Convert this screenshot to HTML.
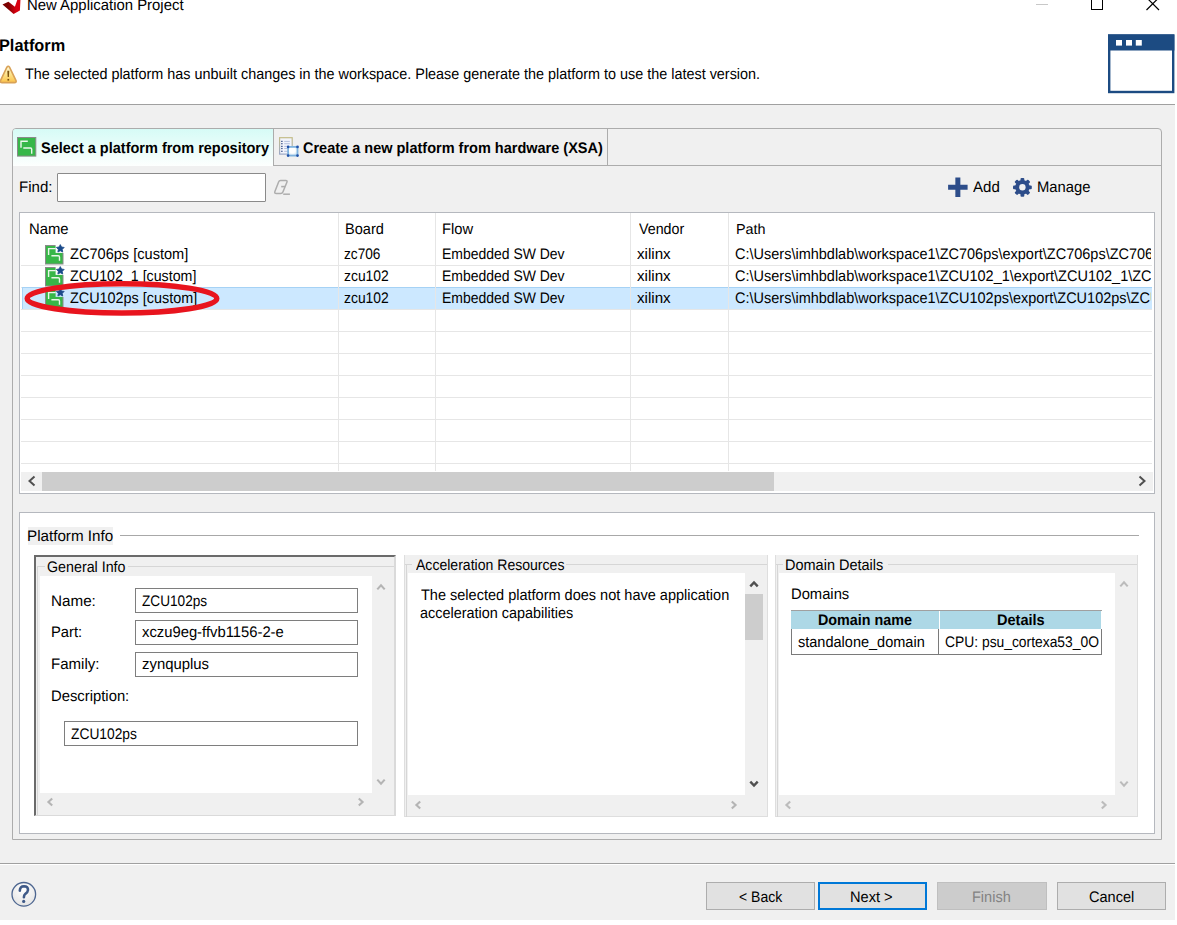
<!DOCTYPE html>
<html><head><meta charset="utf-8"><style>
html,body{margin:0;padding:0;width:1177px;height:925px;overflow:hidden;background:#fff}
body{position:relative;font-family:"Liberation Sans",sans-serif;}
body>div,body>svg{position:absolute}
.t{white-space:nowrap;line-height:1.149;text-rendering:geometricPrecision;}
</style></head><body>
<div style="left:0px;top:0px;width:1177px;height:925px;background:#fff"></div>
<div style="left:0px;top:104px;width:1175px;height:1px;background:#a0a0a0"></div>
<div style="left:0px;top:105px;width:1175px;height:815px;background:#f0f0f0"></div>
<svg style="left:0px;top:0px" width="24" height="16"><defs><linearGradient id="lg" x1="0" x2="1" y1="0" y2="0"><stop offset="0.3" stop-color="#7a0000"/><stop offset="0.75" stop-color="#d80010"/></linearGradient></defs><polygon points="2.5,4.4 8.4,1.8 14.9,6.8 17.6,-1 20.5,-1 19.9,10.4 13.6,13.9" fill="url(#lg)"/></svg>
<div class="t" style="left:27.17px;top:-3px;font-size:15.30px;color:#000;transform:scaleX(0.9740);transform-origin:0 0;">New Application Project</div>
<div style="left:1036px;top:4px;width:12px;height:1px;background:#c8c8c8"></div>
<div style="left:1090.5px;top:-4px;width:12.5px;height:13.6px;border:1.2px solid #000;box-sizing:border-box"></div>
<svg style="left:1144px;top:-3px" width="18" height="16"><path d="M2.5,0.5 L15,13 M15,0.5 L2.5,13" stroke="#000" stroke-width="1.2"/></svg>
<div class="t" style="left:-0.60px;top:36px;font-size:16.80px;font-weight:bold;color:#000;transform:scaleX(0.9715);transform-origin:0 0;">Platform</div>
<svg style="left:0px;top:64px" width="18" height="21"><defs><linearGradient id="wg" x1="0" x2="0" y1="0" y2="1"><stop offset="0" stop-color="#fffbe0"/><stop offset="0.5" stop-color="#fde38a"/><stop offset="1" stop-color="#fbc24a"/></linearGradient></defs><path d="M6.9,3.2 Q8.2,1.2 9.5,3.2 L15.9,16.3 Q16.8,18.6 14.4,18.6 L2.1,18.6 Q-0.3,18.6 0.6,16.3 Z" fill="url(#wg)" stroke="#d9a257" stroke-width="1.6" stroke-linejoin="round"/><path d="M7.3,6.8 H9.3 L8.9,13 H7.7 Z" fill="#7a5210"/><rect x="7.45" y="14.9" width="1.7" height="1.7" fill="#7a5210"/></svg>
<div class="t" style="left:24.68px;top:66px;font-size:15.30px;color:#000;transform:scaleX(0.9406);transform-origin:0 0;">The selected platform has unbuilt changes in the workspace. Please generate the platform to use the latest version.</div>
<svg style="left:1107px;top:34px" width="68" height="60"><rect x="2.2" y="1.5" width="64" height="56.5" fill="#fff" stroke="#1c4b82" stroke-width="2.4"/><rect x="1" y="0.5" width="66.4" height="16" fill="#1c4b82"/><rect x="9" y="6" width="6" height="5.6" fill="#fff"/><rect x="19" y="6" width="6" height="5.6" fill="#fff"/><rect x="28.8" y="6" width="6" height="5.6" fill="#fff"/></svg>
<div style="left:12px;top:128px;width:1150px;height:712px;border:1px solid #acacac;border-radius:4px 4px 0 0;box-sizing:border-box"></div>
<div style="left:13px;top:129px;width:260px;height:37px;background:linear-gradient(#d6fbf6,#fdfffe);border-radius:3px 0 0 0"></div>
<div style="left:273px;top:129px;width:1px;height:37px;background:#acacac"></div>
<div style="left:273px;top:165px;width:888px;height:1px;background:#acacac"></div>
<div style="left:607px;top:129px;width:1px;height:36px;background:#acacac"></div>
<svg style="left:16px;top:136px" width="22" height="22"><rect x="1.5" y="1.5" width="18.3" height="18.6" fill="#36b749" stroke="#8a8a8a" stroke-width="1"/><path d="M5,11.8 V5.2 H11.8 M7.3,12 H14.5 Q15.7,12 15.7,13.2 V17.7" fill="none" stroke="#fff" stroke-width="1.4" opacity="0.9"/></svg>
<div class="t" style="left:40.56px;top:140px;font-size:15.30px;font-weight:bold;color:#000;transform:scaleX(0.9481);transform-origin:0 0;">Select a platform from repository</div>
<svg style="left:278px;top:136px" width="22" height="22"><defs><linearGradient id="dg" x1="0" x2="0" y1="0" y2="1"><stop offset="0" stop-color="#c4bc88"/><stop offset="1" stop-color="#9aa8c8"/></linearGradient><radialGradient id="sq" cx="0.45" cy="0.4" r="0.6"><stop offset="0.5" stop-color="#ffffff"/><stop offset="1" stop-color="#cfe6f5"/></radialGradient></defs><rect x="1.6" y="1.7" width="12.6" height="16.4" fill="#f2f4fc" stroke="url(#dg)" stroke-width="1.2"/><g fill="#566a98"><rect x="3" y="4.8" width="1.7" height="1.2"/><rect x="3" y="7.1" width="1.7" height="1.2"/><rect x="3" y="9.8" width="1.7" height="1.2"/><rect x="3" y="11.9" width="1.7" height="1.2"/><rect x="3" y="14.7" width="1.7" height="1.2"/></g><g fill="#b4c0dc"><rect x="6.2" y="4.9" width="5.6" height="1"/><rect x="6.2" y="7.2" width="5.6" height="1"/><rect x="6.2" y="9.9" width="5.6" height="1"/><rect x="6.2" y="12.0" width="5.6" height="1"/><rect x="6.2" y="14.8" width="5.6" height="1"/></g><rect x="10.1" y="10.9" width="9.4" height="8.7" fill="url(#sq)" stroke="#7fb3de" stroke-width="1.8"/><g fill="#1f4fa8"><circle cx="10.1" cy="10.9" r="1.3"/><circle cx="10.1" cy="19.6" r="1.3"/><circle cx="19.5" cy="10.9" r="1.3"/><circle cx="19.5" cy="19.6" r="1.3"/></g></svg>
<div class="t" style="left:302.62px;top:140px;font-size:15.30px;font-weight:bold;color:#000;transform:scaleX(0.9482);transform-origin:0 0;">Create a new platform from hardware (XSA)</div>
<div class="t" style="left:18.56px;top:179px;font-size:15.30px;color:#000;transform:scaleX(0.9852);transform-origin:0 0;">Find:</div>
<div style="left:57px;top:172.5px;width:208.5px;height:29.5px;background:#fff;border:1.5px solid #8a8a8a;border-radius:1px;box-sizing:border-box"></div>
<svg style="left:273px;top:179px" width="18" height="17"><path d="M7.6,1.5 H12.8 Q14.6,1.5 13.9,3.2 L9.9,12.9 Q9.3,14.5 7.6,14.5 H3.3 Q1.2,14.5 1.9,12.6 L5.6,2.9 Q6.1,1.5 7.6,1.5 Z" fill="none" stroke="#adadad" stroke-width="1.5"/><path d="M8.2,7.6 H12" stroke="#adadad" stroke-width="1.6"/><path d="M10.2,15.2 H16.9" stroke="#adadad" stroke-width="1.5"/></svg>
<svg style="left:947px;top:177px" width="22" height="21"><path d="M1.1,10.25 H20.6 M10.85,0.5 V20.1" stroke="#2d4d8a" stroke-width="5"/></svg>
<div class="t" style="left:973.26px;top:179px;font-size:15.30px;color:#000;transform:scaleX(0.9847);transform-origin:0 0;">Add</div>
<svg style="left:1012px;top:177px" width="22" height="21" viewBox="-10.4 -10.3 22 21"><g fill="#2d4d8a"><circle r="7.2"/><rect x="-1.9" y="-9.4" width="3.8" height="4" rx="1" transform="rotate(0)"/><rect x="-1.9" y="-9.4" width="3.8" height="4" rx="1" transform="rotate(45)"/><rect x="-1.9" y="-9.4" width="3.8" height="4" rx="1" transform="rotate(90)"/><rect x="-1.9" y="-9.4" width="3.8" height="4" rx="1" transform="rotate(135)"/><rect x="-1.9" y="-9.4" width="3.8" height="4" rx="1" transform="rotate(180)"/><rect x="-1.9" y="-9.4" width="3.8" height="4" rx="1" transform="rotate(225)"/><rect x="-1.9" y="-9.4" width="3.8" height="4" rx="1" transform="rotate(270)"/><rect x="-1.9" y="-9.4" width="3.8" height="4" rx="1" transform="rotate(315)"/></g><circle r="3.2" fill="#f0f0f0"/></svg>
<div class="t" style="left:1036.68px;top:179px;font-size:15.30px;color:#000;transform:scaleX(0.9670);transform-origin:0 0;">Manage</div>
<div style="left:19px;top:212px;width:1136px;height:282px;background:#fff;border:1px solid #b5b8be;box-sizing:border-box"></div>
<div style="left:21px;top:264.5px;width:1130.5px;height:1px;background:#e6e6e6"></div>
<div style="left:21px;top:286.5px;width:1130.5px;height:1px;background:#e6e6e6"></div>
<div style="left:21px;top:308.5px;width:1130.5px;height:1px;background:#e6e6e6"></div>
<div style="left:21px;top:330.5px;width:1130.5px;height:1px;background:#e6e6e6"></div>
<div style="left:21px;top:352.5px;width:1130.5px;height:1px;background:#e6e6e6"></div>
<div style="left:21px;top:374.5px;width:1130.5px;height:1px;background:#e6e6e6"></div>
<div style="left:21px;top:396.5px;width:1130.5px;height:1px;background:#e6e6e6"></div>
<div style="left:21px;top:418.5px;width:1130.5px;height:1px;background:#e6e6e6"></div>
<div style="left:21px;top:440.5px;width:1130.5px;height:1px;background:#e6e6e6"></div>
<div style="left:21px;top:462.5px;width:1130.5px;height:1px;background:#e6e6e6"></div>
<div style="left:22px;top:287px;width:1129.5px;height:21.5px;background:#cce8ff;border-top:1px solid #a6d2f5;border-left:1px solid #a6d2f5;box-sizing:border-box"></div>
<div style="left:337.5px;top:213px;width:1px;height:258px;background:#e6e6e6"></div>
<div style="left:435.0px;top:213px;width:1px;height:258px;background:#e6e6e6"></div>
<div style="left:630.0px;top:213px;width:1px;height:258px;background:#e6e6e6"></div>
<div style="left:727.5px;top:213px;width:1px;height:258px;background:#e6e6e6"></div>
<div class="t" style="left:28.78px;top:221px;font-size:15.30px;color:#000;transform:scaleX(0.9691);transform-origin:0 0;">Name</div>
<div class="t" style="left:345.30px;top:221px;font-size:15.30px;color:#000;transform:scaleX(0.9509);transform-origin:0 0;">Board</div>
<div class="t" style="left:442.49px;top:221px;font-size:15.30px;color:#000;transform:scaleX(0.9615);transform-origin:0 0;">Flow</div>
<div class="t" style="left:638.63px;top:221px;font-size:15.30px;color:#000;transform:scaleX(0.9316);transform-origin:0 0;">Vendor</div>
<div class="t" style="left:736.00px;top:222px;font-size:14.40px;color:#000;">Path</div>
<svg style="left:44px;top:244px" width="22" height="21"><rect x="1.5" y="1.5" width="17.5" height="18.5" fill="#38b648" stroke="#8a8a8a" stroke-width="1"/><path d="M4.6,10.9 V4.6 H11.7 M7.4,11.7 H14.3 Q15.5,11.7 15.5,12.9 V16.8" fill="none" stroke="#e8f8e8" stroke-width="1.4"/><rect x="11.6" y="0" width="10.4" height="8.9" fill="#fff"/><polygon points="16.30,0.60 17.53,3.00 20.20,3.43 18.30,5.35 18.71,8.02 16.30,6.80 13.89,8.02 14.30,5.35 12.40,3.43 15.07,3.00" fill="#1a4a8a" stroke="#1a4a8a" stroke-width="0.8" stroke-linejoin="round"/></svg>
<div class="t" style="left:69.73px;top:246px;font-size:15.30px;color:#000;transform:scaleX(0.9528);transform-origin:0 0;">ZC706ps [custom]</div>
<div class="t" style="left:343.95px;top:246px;font-size:15.30px;color:#000;transform:scaleX(0.8925);transform-origin:0 0;">zc706</div>
<div class="t" style="left:441.85px;top:246px;font-size:15.30px;color:#000;transform:scaleX(0.9126);transform-origin:0 0;">Embedded SW Dev</div>
<div class="t" style="left:637.21px;top:246px;font-size:15.30px;color:#000;transform:scaleX(0.9904);transform-origin:0 0;">xilinx</div>
<div class="t" style="left:735.30px;top:246px;font-size:15.30px;color:#000;transform:scaleX(0.9477);transform-origin:0 0;width:439.16px;overflow:hidden;">C:\Users\imhbdlab\workspace1\ZC706ps\export\ZC706ps\ZC706ps.xpfm</div>
<svg style="left:44px;top:266px" width="22" height="21"><rect x="1.5" y="1.5" width="17.5" height="18.5" fill="#38b648" stroke="#8a8a8a" stroke-width="1"/><path d="M4.6,10.9 V4.6 H11.7 M7.4,11.7 H14.3 Q15.5,11.7 15.5,12.9 V16.8" fill="none" stroke="#e8f8e8" stroke-width="1.4"/><rect x="11.6" y="0" width="10.4" height="8.9" fill="#fff"/><polygon points="16.30,0.60 17.53,3.00 20.20,3.43 18.30,5.35 18.71,8.02 16.30,6.80 13.89,8.02 14.30,5.35 12.40,3.43 15.07,3.00" fill="#1a4a8a" stroke="#1a4a8a" stroke-width="0.8" stroke-linejoin="round"/></svg>
<div class="t" style="left:69.74px;top:268px;font-size:15.30px;color:#000;transform:scaleX(0.9287);transform-origin:0 0;">ZCU102_1 [custom]</div>
<div class="t" style="left:343.94px;top:268px;font-size:15.30px;color:#000;transform:scaleX(0.9076);transform-origin:0 0;">zcu102</div>
<div class="t" style="left:441.85px;top:268px;font-size:15.30px;color:#000;transform:scaleX(0.9126);transform-origin:0 0;">Embedded SW Dev</div>
<div class="t" style="left:637.21px;top:268px;font-size:15.30px;color:#000;transform:scaleX(0.9904);transform-origin:0 0;">xilinx</div>
<div class="t" style="left:735.30px;top:268px;font-size:15.30px;color:#000;transform:scaleX(0.9477);transform-origin:0 0;width:439.16px;overflow:hidden;">C:\Users\imhbdlab\workspace1\ZCU102_1\export\ZCU102_1\ZCU102_1.xpfm</div>
<svg style="left:44px;top:288px" width="22" height="21"><rect x="1.5" y="1.5" width="17.5" height="18.5" fill="#38b648" stroke="#8a8a8a" stroke-width="1"/><path d="M4.6,10.9 V4.6 H11.7 M7.4,11.7 H14.3 Q15.5,11.7 15.5,12.9 V16.8" fill="none" stroke="#e8f8e8" stroke-width="1.4"/><rect x="11.6" y="0" width="10.4" height="8.9" fill="#cce8ff"/><polygon points="16.30,0.60 17.53,3.00 20.20,3.43 18.30,5.35 18.71,8.02 16.30,6.80 13.89,8.02 14.30,5.35 12.40,3.43 15.07,3.00" fill="#1a4a8a" stroke="#1a4a8a" stroke-width="0.8" stroke-linejoin="round"/></svg>
<div class="t" style="left:69.73px;top:290px;font-size:15.30px;color:#000;transform:scaleX(0.9413);transform-origin:0 0;">ZCU102ps [custom]</div>
<div class="t" style="left:343.94px;top:290px;font-size:15.30px;color:#000;transform:scaleX(0.9076);transform-origin:0 0;">zcu102</div>
<div class="t" style="left:441.85px;top:290px;font-size:15.30px;color:#000;transform:scaleX(0.9126);transform-origin:0 0;">Embedded SW Dev</div>
<div class="t" style="left:637.21px;top:290px;font-size:15.30px;color:#000;transform:scaleX(0.9904);transform-origin:0 0;">xilinx</div>
<div class="t" style="left:735.30px;top:290px;font-size:15.30px;color:#000;transform:scaleX(0.9477);transform-origin:0 0;width:439.16px;overflow:hidden;">C:\Users\imhbdlab\workspace1\ZCU102ps\export\ZCU102ps\ZCU102ps.xpfm</div>
<div style="left:21px;top:472px;width:1132px;height:19px;background:#f0f0f0"></div>
<div style="left:42.3px;top:472px;width:732px;height:19px;background:#cdcdcd"></div>
<svg style="left:26px;top:475px" width="12" height="12"><path d="M8.5,1.5 L3.5,6 L8.5,10.5" fill="none" stroke="#505050" stroke-width="2"/></svg>
<svg style="left:1136px;top:475px" width="12" height="12"><path d="M3.5,1.5 L8.5,6 L3.5,10.5" fill="none" stroke="#505050" stroke-width="2"/></svg>
<svg style="left:20px;top:276px" width="210" height="44"><ellipse cx="102" cy="22.4" rx="94.8" ry="14.6" fill="none" stroke="#e8141e" stroke-width="5.4"/></svg>
<div style="left:19px;top:512px;width:1136px;height:321.5px;background:#fff;border:1px solid #b5b8be;box-sizing:border-box"></div>
<div style="left:120px;top:534.5px;width:1019px;height:1px;background:#a8a8a8"></div>
<div style="left:27.6px;top:527.3px;width:85.4px;height:17.7px;background:#f0f0f0"></div>
<div class="t" style="left:26.95px;top:528px;font-size:15.30px;color:#000;transform:scaleX(0.9937);transform-origin:0 0;">Platform Info</div>
<div style="left:34px;top:555px;width:361.5px;height:261px;background:#f0f0f0;border-left:2px solid #6a6a6a;border-top:2px solid #6a6a6a;border-right:2px solid #dadada;border-bottom:1px solid #dadada;box-sizing:border-box"></div>
<div style="left:38px;top:566px;width:6.5px;height:1px;background:#d6d6d6"></div>
<div style="left:128px;top:566px;width:266px;height:1px;background:#d6d6d6"></div>
<div style="left:37px;top:566px;width:1px;height:249px;background:#d6d6d6"></div>
<div class="t" style="left:46.99px;top:559px;font-size:15.30px;color:#000;transform:scaleX(0.9322);transform-origin:0 0;">General Info</div>
<div style="left:40px;top:575.6px;width:331.6px;height:217.1px;background:#fff"></div>
<div class="t" style="left:51.14px;top:593px;font-size:15.30px;color:#000;transform:scaleX(0.9948);transform-origin:0 0;">Name:</div>
<div class="t" style="left:51.18px;top:624px;font-size:15.30px;color:#000;transform:scaleX(0.9635);transform-origin:0 0;">Part:</div>
<div class="t" style="left:51.16px;top:656px;font-size:15.30px;color:#000;transform:scaleX(0.9836);transform-origin:0 0;">Family:</div>
<div class="t" style="left:51.18px;top:688px;font-size:15.30px;color:#000;transform:scaleX(0.9687);transform-origin:0 0;">Description:</div>
<div style="left:135px;top:588px;width:223px;height:25px;background:#fff;border:1.3px solid #7e7e7e;box-sizing:border-box"></div>
<div class="t" style="left:141.76px;top:593px;font-size:15.30px;color:#000;transform:scaleX(0.8904);transform-origin:0 0;">ZCU102ps</div>
<div style="left:135px;top:620px;width:223px;height:25px;background:#fff;border:1.3px solid #7e7e7e;box-sizing:border-box"></div>
<div class="t" style="left:142.01px;top:624px;font-size:15.30px;color:#000;transform:scaleX(0.9675);transform-origin:0 0;">xczu9eg-ffvb1156-2-e</div>
<div style="left:135px;top:651.6px;width:223px;height:25px;background:#fff;border:1.3px solid #7e7e7e;box-sizing:border-box"></div>
<div class="t" style="left:141.60px;top:656px;font-size:15.30px;color:#000;transform:scaleX(0.9728);transform-origin:0 0;">zynquplus</div>
<div style="left:64.3px;top:721px;width:293.7px;height:25.3px;background:#fff;border:1.3px solid #7e7e7e;box-sizing:border-box"></div>
<div class="t" style="left:70.95px;top:726px;font-size:15.30px;color:#000;transform:scaleX(0.9015);transform-origin:0 0;">ZCU102ps</div>
<svg style="left:373.6px;top:579.6px" width="14" height="14" viewBox="-7 -7 14 14"><path d="M-3.7,2.4 L0,-1.6 L3.7,2.4" fill="none" stroke="#b4b4b4" stroke-width="2.1"/></svg>
<svg style="left:373.6px;top:775px" width="14" height="14" viewBox="-7 -7 14 14"><path d="M-3.7,-2.4 L0,1.6 L3.7,-2.4" fill="none" stroke="#b4b4b4" stroke-width="2.1"/></svg>
<svg style="left:42.7px;top:795.3px" width="14" height="14" viewBox="-7 -7 14 14"><path d="M2.2,-3.6 L-1.6,0 L2.2,3.6" fill="none" stroke="#b4b4b4" stroke-width="2.1"/></svg>
<svg style="left:353.5px;top:794.5px" width="14" height="14" viewBox="-7 -7 14 14"><path d="M-2.2,-3.6 L1.6,0 L-2.2,3.6" fill="none" stroke="#b4b4b4" stroke-width="2.1"/></svg>
<div style="left:404px;top:555px;width:364px;height:262px;background:#f0f0f0;border:1.5px solid #dedede;border-top:none;box-sizing:border-box"></div>
<div style="left:405px;top:563.5px;width:7px;height:1px;background:#d6d6d6"></div>
<div style="left:566px;top:563.5px;width:201px;height:1px;background:#d6d6d6"></div>
<div style="left:405.5px;top:563.5px;width:1px;height:253px;background:#d6d6d6"></div>
<div class="t" style="left:415.96px;top:557px;font-size:15.30px;color:#000;transform:scaleX(0.9187);transform-origin:0 0;">Acceleration Resources</div>
<div style="left:408px;top:573px;width:337px;height:222px;background:#fff"></div>
<div class="t" style="left:420.77px;top:587px;font-size:15.30px;color:#000;transform:scaleX(0.9488);transform-origin:0 0;">The selected platform does not have application</div>
<div class="t" style="left:420.49px;top:605px;font-size:15.30px;color:#000;transform:scaleX(0.9432);transform-origin:0 0;">acceleration capabilities</div>
<div style="left:745.4px;top:594.4px;width:17.6px;height:46px;background:#cdcdcd"></div>
<svg style="left:746.6px;top:577.1px" width="14" height="14" viewBox="-7 -7 14 14"><path d="M-3.7,2.4 L0,-1.6 L3.7,2.4" fill="none" stroke="#505050" stroke-width="2.4"/></svg>
<svg style="left:746.7px;top:777.3px" width="14" height="14" viewBox="-7 -7 14 14"><path d="M-3.7,-2.4 L0,1.6 L3.7,-2.4" fill="none" stroke="#505050" stroke-width="2.4"/></svg>
<svg style="left:410.5px;top:797.5px" width="14" height="14" viewBox="-7 -7 14 14"><path d="M2.2,-3.6 L-1.6,0 L2.2,3.6" fill="none" stroke="#b4b4b4" stroke-width="2.1"/></svg>
<svg style="left:726.7px;top:797.7px" width="14" height="14" viewBox="-7 -7 14 14"><path d="M-2.2,-3.6 L1.6,0 L-2.2,3.6" fill="none" stroke="#b4b4b4" stroke-width="2.1"/></svg>
<div style="left:775px;top:555px;width:363px;height:262px;background:#f0f0f0;border:1.5px solid #dedede;border-top:none;box-sizing:border-box"></div>
<div style="left:776px;top:563.5px;width:7px;height:1px;background:#d6d6d6"></div>
<div style="left:888px;top:563.5px;width:249px;height:1px;background:#d6d6d6"></div>
<div style="left:776.5px;top:563.5px;width:1px;height:253px;background:#d6d6d6"></div>
<div class="t" style="left:785.20px;top:557px;font-size:15.30px;color:#000;transform:scaleX(0.9477);transform-origin:0 0;">Domain Details</div>
<div style="left:778.8px;top:573.3px;width:336.5px;height:222px;background:#fff"></div>
<div class="t" style="left:790.58px;top:586px;font-size:15.30px;color:#000;transform:scaleX(0.9648);transform-origin:0 0;">Domains</div>
<div style="left:791px;top:610px;width:311px;height:1px;background:#a0a0a0"></div>
<div style="left:791px;top:611px;width:147.5px;height:18px;background:#add8e6"></div>
<div style="left:940px;top:611px;width:161px;height:18px;background:#add8e6"></div>
<div style="left:791px;top:629px;width:311px;height:26px;background:#fff;border:1px solid #7a7a7a;border-top:none;box-sizing:border-box"></div>
<div style="left:938px;top:629px;width:1px;height:26px;background:#7a7a7a"></div>
<div class="t" style="left:817.53px;top:612px;font-size:15.30px;font-weight:bold;color:#000;transform:scaleX(0.9366);transform-origin:0 0;">Domain name</div>
<div class="t" style="left:996.62px;top:612px;font-size:15.30px;font-weight:bold;color:#000;transform:scaleX(0.9505);transform-origin:0 0;">Details</div>
<div class="t" style="left:798.20px;top:634px;font-size:15.30px;color:#000;transform:scaleX(0.9492);transform-origin:0 0;">standalone_domain</div>
<div class="t" style="left:945.31px;top:634px;font-size:15.30px;color:#000;transform:scaleX(0.9051);transform-origin:0 0;">CPU: psu_cortexa53_0O</div>
<svg style="left:1117.3px;top:577.2px" width="14" height="14" viewBox="-7 -7 14 14"><path d="M-3.7,2.4 L0,-1.6 L3.7,2.4" fill="none" stroke="#bcbcbc" stroke-width="2.1"/></svg>
<svg style="left:1117.3px;top:777.3px" width="14" height="14" viewBox="-7 -7 14 14"><path d="M-3.7,-2.4 L0,1.6 L3.7,-2.4" fill="none" stroke="#bcbcbc" stroke-width="2.1"/></svg>
<svg style="left:781.4px;top:797.5px" width="14" height="14" viewBox="-7 -7 14 14"><path d="M2.2,-3.6 L-1.6,0 L2.2,3.6" fill="none" stroke="#bcbcbc" stroke-width="2.1"/></svg>
<svg style="left:1097px;top:797.5px" width="14" height="14" viewBox="-7 -7 14 14"><path d="M-2.2,-3.6 L1.6,0 L-2.2,3.6" fill="none" stroke="#bcbcbc" stroke-width="2.1"/></svg>
<div style="left:0px;top:862.5px;width:1175px;height:1px;background:#a0a0a0"></div>
<div style="left:0px;top:863.5px;width:1175px;height:1px;background:#fff"></div>
<svg style="left:10px;top:880px" width="28" height="28"><defs><radialGradient id="hg" cx="0.5" cy="0.3" r="0.7"><stop offset="0" stop-color="#ffffff"/><stop offset="1" stop-color="#e4e4e4"/></radialGradient></defs><circle cx="13.8" cy="14.3" r="11.8" fill="url(#hg)" stroke="#4d6690" stroke-width="1.3"/><path d="M9.8,10.6 Q10,6.2 14,6.2 Q18.2,6.3 18,10 Q17.8,12.3 15.4,13.8 Q13.9,14.9 13.9,17.3" fill="none" stroke="#3f5a88" stroke-width="2.6" stroke-linecap="round"/><circle cx="13.7" cy="21.4" r="1.6" fill="#3f5a88"/></svg>
<div style="left:706px;top:882.4px;width:109px;height:27.4px;background:#e1e1e1;border:1px solid #adadad;box-sizing:border-box"></div>
<div class="t" style="left:739.10px;top:889px;font-size:15.30px;color:#000;transform:scaleX(0.9152);transform-origin:0 0;">&lt; Back</div>
<div style="left:818px;top:882.4px;width:109.20000000000005px;height:27.4px;background:#e1e1e1;border:2px solid #0078d7;box-sizing:border-box"></div>
<div class="t" style="left:850.10px;top:889px;font-size:15.30px;color:#000;transform:scaleX(0.9543);transform-origin:0 0;">Next &gt;</div>
<div style="left:937.2px;top:882.4px;width:109.79999999999995px;height:27.4px;background:#cccccc;border:1px solid #bfbfbf;box-sizing:border-box"></div>
<div class="t" style="left:972.00px;top:889px;font-size:15.30px;color:#838383;transform:scaleX(0.9493);transform-origin:0 0;">Finish</div>
<div style="left:1057px;top:882.4px;width:109px;height:27.4px;background:#e1e1e1;border:1px solid #adadad;box-sizing:border-box"></div>
<div class="t" style="left:1089.27px;top:889px;font-size:15.30px;color:#000;transform:scaleX(0.9493);transform-origin:0 0;">Cancel</div>
</body></html>
